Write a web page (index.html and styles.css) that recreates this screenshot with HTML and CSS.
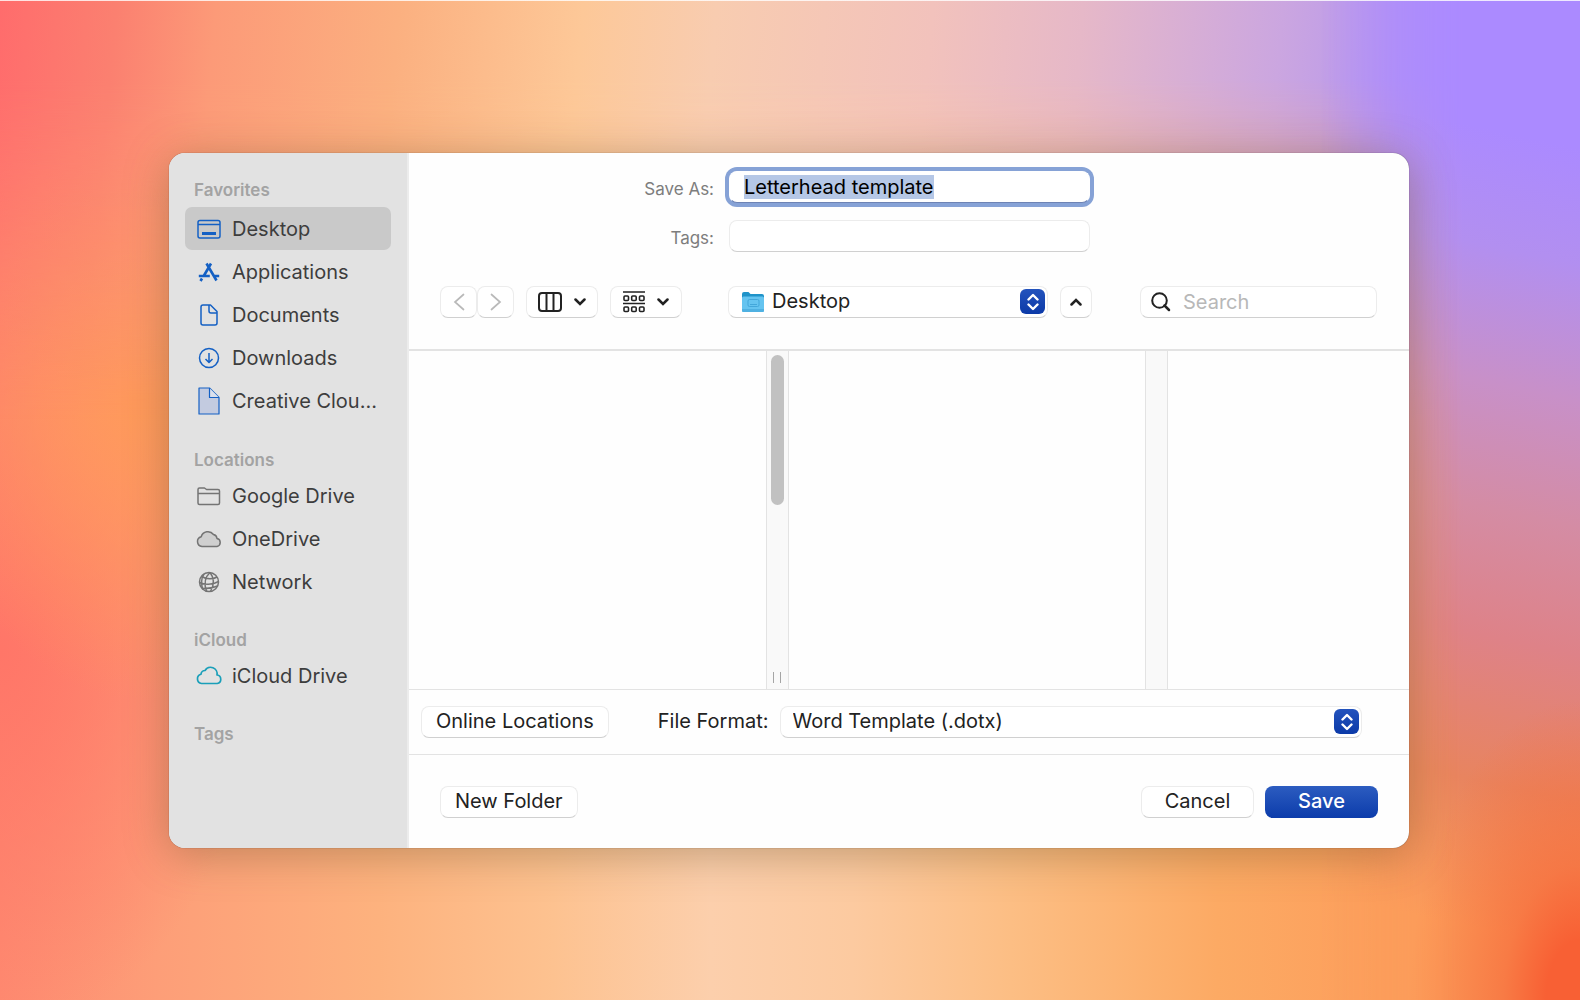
FILE: index.html
```html
<!DOCTYPE html>
<html lang="en">
<head>
<meta charset="utf-8">
<title>Save As</title>
<link rel="stylesheet" href="styles.css">
</head>
<body>
<form class="dialog">
  <nav class="sidebar">
    <h2 class="group-title">Favorites</h2>
    <ul class="places">
      <li><a class="place selected" href="#desktop"><svg class="icon blue" viewBox="0 0 26 26"><rect x="2" y="4.500" width="22" height="17.500" rx="2"/><path d="M2 8.500h22"/><path d="M6 17.500h14" stroke-width="3"/></svg>Desktop</a></li>
      <li><a class="place" href="#applications"><svg class="icon blue" viewBox="0 0 26 26"><g stroke-width="2.600"><path d="M10.500 4.500L20.500 21.500M15 4.500L8 16.500M6 19.500L4.500 22M2.800 17h11M18.500 17h4.700"/></g></svg>Applications</a></li>
      <li><a class="place" href="#documents"><svg class="icon blue" viewBox="0 0 26 26"><path d="M7 3h7.500l6.500 6.500V21a2 2 0 0 1-2 2H7a2 2 0 0 1-2-2V5a2 2 0 0 1 2-2zM13 3.500V9a2 2 0 0 0 2 2h5.500"/></svg>Documents</a></li>
      <li><a class="place" href="#downloads"><svg class="icon blue" viewBox="0 0 26 26"><circle cx="13" cy="13" r="9.500"/><path d="M13 8v9.500M9.500 14l3.500 3.500 3.500-3.500"/></svg>Downloads</a></li>
      <li><a class="place" href="#creative-cloud"><svg class="icon blue" viewBox="0 0 26 26"><path d="M3 0H13.500L23 9.500V26H3z" fill="#c3cbe0" stroke-width="1.200"/><path d="M13.500 0V9.500H23" stroke-width="1.200" fill="#dbe0ec"/></svg>Creative Clou...</a></li>
    </ul>
    <h2 class="group-title">Locations</h2>
    <ul class="places">
      <li><a class="place" href="#google-drive"><svg class="icon gray" viewBox="0 0 26 26"><path d="M2 20V6.500A1.500 1.500 0 0 1 3.500 5h5l2 1.500H22A1.500 1.500 0 0 1 23.500 8v12a1.500 1.500 0 0 1-1.500 1.500H3.500A1.500 1.500 0 0 1 2 20zM2 10.500h21.500"/></svg>Google Drive</a></li>
      <li><a class="place" href="#onedrive"><svg class="icon gray" viewBox="0 0 26 26"><path d="M6 20.500a5 5 0 0 1-.8-9.800A7 7 0 0 1 17.500 8.500a4.500 4.500 0 0 1 3.500 4A4.100 4.100 0 0 1 21 20.500z" fill="#cfcfcf"/></svg>OneDrive</a></li>
      <li><a class="place" href="#network"><svg class="icon gray" viewBox="0 0 26 26"><circle cx="13" cy="13" r="9.500"/><path d="M14 3.500C9 8 8 15 10.500 22.300M14 3.500c4 5 4.500 12 .5 19M5.500 7.500c5 3 11.500 3 15.500.5M3.500 13.500c5 2.500 13 2.500 19-1M6 19.500c4 0 11-.5 15.500-2.500M8 5c-3 4-3 11-1 15.500"/></svg>Network</a></li>
    </ul>
    <h2 class="group-title">iCloud</h2>
    <ul class="places">
      <li><a class="place" href="#icloud-drive"><svg class="icon teal" viewBox="0 0 26 26"><path d="M5.500 20.500a4.700 4.700 0 0 1-.5-9.200 4 4 0 0 1 4-3.800A6.500 6.500 0 0 1 21 12A4.300 4.300 0 0 1 21.200 20.500z"/></svg>iCloud Drive</a></li>
    </ul>
    <h2 class="group-title">Tags</h2>
  </nav>
  <main class="content">
    <header class="header">
      <label class="field-label" for="name">Save As:</label>
      <input class="field name" id="name" type="text" value="Letterhead template">
      <label class="field-label" for="tags">Tags:</label>
      <input class="field" id="tags" type="text">
      <div class="tools">
        <div class="nav-buttons">
          <button class="control nav" type="button" aria-label="Back"><svg width="12" height="18" viewBox="0 0 12 18"><path d="M10.500 1.500L2 9l8.500 7.500"/></svg></button>
          <button class="control nav" type="button" aria-label="Forward"><svg width="12" height="18" viewBox="0 0 12 18"><path d="M1.500 1.500L10 9l-8.500 7.500"/></svg></button>
        </div>
        <button class="control view" type="button" aria-label="Column view"><svg width="24" height="20" viewBox="0 0 24 20"><rect x="1" y="1" width="22" height="18" rx="3"/><path d="M8.500 1v18M15.500 1v18"/></svg><svg width="12" height="8" viewBox="0 0 12 8"><path class="bold" d="M1.500 1.500L6 6l4.500-4.500"/></svg></button>
        <button class="control view grouping" type="button" aria-label="Group items"><svg width="22" height="22" viewBox="0 0 22 22"><path d="M0 1h22M0 12.500h22"/><rect x="1" y="5" width="4.500" height="4.500" rx="1"/><rect x="8.700" y="5" width="4.500" height="4.500" rx="1"/><rect x="16.500" y="5" width="4.500" height="4.500" rx="1"/><rect x="1" y="16" width="4.500" height="4.500" rx="1"/><rect x="8.700" y="16" width="4.500" height="4.500" rx="1"/><rect x="16.500" y="16" width="4.500" height="4.500" rx="1"/></svg><svg width="12" height="8" viewBox="0 0 12 8"><path class="bold" d="M1.500 1.500L6 6l4.500-4.500"/></svg></button>
      </div>
      <div class="path">
        <div class="popup">
          <svg class="folder" width="24" height="22" viewBox="0 0 24 22"><path d="M1 3a2 2 0 0 1 2-2h4.500l2 2H21a2 2 0 0 1 2 2v5H1z" fill="#1f93c9"/><rect x="1" y="5.500" width="22" height="15.500" rx="1.500" fill="#65c4f0"/><path d="M1 18h22v1.500a1.500 1.500 0 0 1-1.500 1.500h-19A1.500 1.500 0 0 1 1 19.500z" fill="#4fb1e2"/><rect x="7" y="8.500" width="11" height="7" rx="1.500" fill="none" stroke="#43a7da"/><path d="M9 13.500h7" stroke="#43a7da"/></svg>
          <select class="control select folder-select" aria-label="Folder"><option>Desktop</option></select>
          <span class="stepper"><svg width="12" height="18" viewBox="0 0 12 18"><path d="M1.500 6.500L6 2l4.500 4.500M1.500 11.500L6 16l4.500-4.500"/></svg></span>
        </div>
        <button class="control up" type="button" aria-label="Collapse"><svg width="12" height="8" viewBox="0 0 12 8"><path class="bold" d="M1.500 6.500L6 2l4.500 4.500"/></svg></button>
      </div>
      <label class="control search"><svg width="20" height="20" viewBox="0 0 20 20"><circle cx="8.500" cy="8.500" r="7.300"/><path class="bold" d="M13.500 13.500L18 18"/></svg><input type="search" placeholder="Search" aria-label="Search"></label>
    </header>
    <section class="browser">
      <div class="column"></div>
      <div class="gutter"><span class="thumb"></span><span class="grip"></span></div>
      <div class="column"></div>
      <div class="gutter"></div>
      <div class="column last"></div>
    </section>
    <section class="format">
      <button class="control push" type="button">Online Locations</button>
      <label class="format-label" for="format">File Format:</label>
      <div class="popup">
        <select class="control select" id="format"><option>Word Template (.dotx)</option></select>
        <span class="stepper"><svg width="12" height="18" viewBox="0 0 12 18"><path d="M1.500 6.500L6 2l4.500 4.500M1.500 11.500L6 16l4.500-4.500"/></svg></span>
      </div>
    </section>
    <footer class="footer">
      <button class="control push" type="button">New Folder</button>
      <div class="actions">
        <button class="control action" type="button">Cancel</button>
        <button class="control action primary" type="submit">Save</button>
      </div>
    </footer>
  </main>
</form>
<script src="script.js"></script>
</body>
</html>
```
FILE: styles.css
```css
* { box-sizing: border-box; }

body {
  position: relative;
  isolation: isolate;
  margin: 0;
  min-height: 100vh;
  padding: 153px 171px 152px 169px;
  font-family: Inter, "Liberation Sans", sans-serif;
  font-size: 20px;
  line-height: 24px;
  color: #222;
  background:
    radial-gradient(ellipse 220px 300px at 9% 40%, #ff9a5a, #ff9a5a00),
    radial-gradient(ellipse 260px 380px at 0% 65%, #ff7668, #ff766800),
    linear-gradient(90deg, #fe8a70, #fd9e78 10%, #fdb27e 24%, #fdc290 35%, #fccfac 45%, #fccaa0 54%, #fcbe84 64%, #fcaa64 77%, #fd9c5a 90%, #fa8a50);
}

/* The wallpaper: a top band and a right edge, each faded into the base. */
body::before, body::after {
  content: "";
  position: absolute;
  inset: 0;
  z-index: -1;
}
body::before {
  background:
    linear-gradient(#fffc, #fffc) 0 0 / 100% 1px no-repeat,
    linear-gradient(95deg, #ff6c6c, #fb8070 7%, #fc9a78 13%, #fbb080 24%, #fdc898 35%, #f8ccb0 43%, #f2c2bc 56%, #e6b8c8 65%, #cba6e0 77%, #b494f0 85%, #ab8aff 92%);
  mask-image: linear-gradient(#000 8%, #0000 42%);
}
body::after {
  top: 1px;
  left: auto;
  width: 260px;
  background:
    radial-gradient(ellipse 170px 300px at 100% 100%, #f86034 20%, #f7703ec0 45%, #f8804800),
    linear-gradient(192deg, #ab8aff 14%, #b28ff0 25%, #c890c8 38%, #d48ca4 50%, #de8288 62%, #e8845f 76%, #fb9c5a 90%);
  mask-image: linear-gradient(270deg, #000 45%, #000a 70%, #0000);
}

.dialog {
  display: flex;
  min-height: 695px;
  border-radius: 16px;
  background: #fefefe;
  overflow: hidden;
  box-shadow: 0 0 1px #0009, 0 6px 44px #6a502a66;
}

h2, ul { margin: 0; padding: 0; }
ul { list-style: none; }
svg { display: block; fill: none; flex: none; }

.sidebar {
  flex: 0 0 240px;
  padding: 25px 16px;
  background: #e2e2e2;
  border-right: 2px solid #ececec;
}
.group-title {
  padding-left: 9px;
  font-size: 17px;
  line-height: 24px;
  font-weight: 600;
  color: #a3a3a3;
}
.places { margin: 5px 0 26px; }
.places + .group-title + .places { margin: 2px 0 25px; }
.place {
  display: flex;
  align-items: center;
  gap: 10px;
  height: 43px;
  padding-left: 11px;
  border-radius: 7px;
  color: #3d3d3d;
  text-decoration: none;
  white-space: nowrap;
}
.place.selected { background: #c9c9c9; }
.icon { width: 26px; height: 26px; overflow: visible; stroke-width: 1.5; stroke-linejoin: round; }
.blue { stroke: #1460c4; }
.gray { stroke: #747474; }
.teal { stroke: #1a9fb9; stroke-width: 1.7; }

.content { flex: 1; min-width: 0; display: flex; flex-direction: column; }

.header {
  display: grid;
  grid-template-columns: minmax(0, 288fr) minmax(0, 364fr) minmax(0, 285fr);
  grid-template-rows: 32px 32px 49px;
  row-gap: 17px;
  padding: 18px 32px 31px 31px;
  border-bottom: 2px solid #e3e3e3;
}
.field-label {
  grid-column: 1;
  align-self: center;
  justify-self: end;
  padding: 3px 14px 0 0;
  font-size: 17px;
  color: #7d7d7d;
}
.field, .control {
  font: inherit;
  color: #222;
  background: #fff;
  border: 1px solid #ececec;
  border-bottom-color: #d0d0d0;
  border-radius: 8px;
  height: 32px;
}
.field { grid-column: 2; margin: 0 2px 0 1px; padding: 0 14px; min-width: 0; outline: 0; }
.name { color: #000; border-color: #fff #fff #6d83b4; box-shadow: 0 0 0 4px #86a2d6; }
.name::selection { background: #b5c7e6; color: #000; }

.tools, .path, .search { margin-top: 17px; }
.tools { grid-column: 1; display: flex; gap: 12px; }
.path { grid-column: 2; display: flex; gap: 12px; }
.nav-buttons { display: flex; }
.control { display: flex; align-items: center; justify-content: center; padding: 0; }
.control svg { stroke: #222; stroke-width: 2; stroke-linecap: round; }
.control .bold { stroke-width: 2.5; }
.nav { width: 37px; }
.control.nav svg { stroke: #b9b9b9; stroke-width: 1.7; }
.view { width: 72px; gap: 12px; }
.grouping svg:first-child { stroke-width: 1.6; stroke-linecap: butt; }
.popup { position: relative; flex: 1; min-width: 0; }
.select { width: 100%; appearance: none; padding: 0 44px 2px 12px; outline: 0; }
.folder-select { padding-left: 43px; }
.folder { position: absolute; left: 13px; top: 5px; }
.stepper {
  position: absolute;
  right: 3px;
  top: 3px;
  width: 25px;
  height: 25px;
  display: grid;
  place-items: center;
  border-radius: 6px;
  background: linear-gradient(#2353bd, #0c3aa8);
  pointer-events: none;
}
.stepper svg { stroke: #fff; stroke-width: 2.4; stroke-linecap: round; stroke-linejoin: round; }
.up { width: 32px; }
.search { grid-column: 3; margin-left: 48px; justify-content: flex-start; gap: 12px; padding-left: 10px; }
.search input { flex: 1; min-width: 0; padding: 0; border: 0; outline: 0; background: none; font: inherit; }
.search input::placeholder { color: #b8b8b8; }

.browser { display: flex; flex: 1; min-height: 338px; }
.column { flex: 357 1 0; }
.column.last { flex-grow: 241; }
.gutter {
  flex: 0 0 23px;
  display: flex;
  flex-direction: column;
  align-items: center;
  justify-content: space-between;
  padding: 4px 0 6px;
  background: #f9f9f9;
  border: solid #e3e3e3;
  border-width: 0 1px;
}
.thumb { width: 13px; height: 150px; border-radius: 7px; background: #c1c1c1; }
.grip { width: 8px; height: 11px; border: solid #a5a5a5; border-width: 0 1px; }

.format {
  display: flex;
  align-items: center;
  height: 66px;
  padding: 0 47px 0 12px;
  border: solid #e3e3e3;
  border-width: 1px 0;
}
.push { padding: 0 14px 2px; white-space: nowrap; }
.format-label { padding: 0 11px 2px 49px; white-space: nowrap; }
.footer {
  display: flex;
  justify-content: space-between;
  align-items: center;
  height: 93px;
  padding: 0 31px;
}
.actions { display: flex; gap: 11px; }
.action { width: 113px; padding-bottom: 2px; }
.primary { color: #fff; font-weight: 500; border: 0; background: linear-gradient(#2c5cc0, #0c3cab); }
```
FILE: script.js
```js
const nameField = document.getElementById('name');
nameField.focus();
nameField.select();
```
